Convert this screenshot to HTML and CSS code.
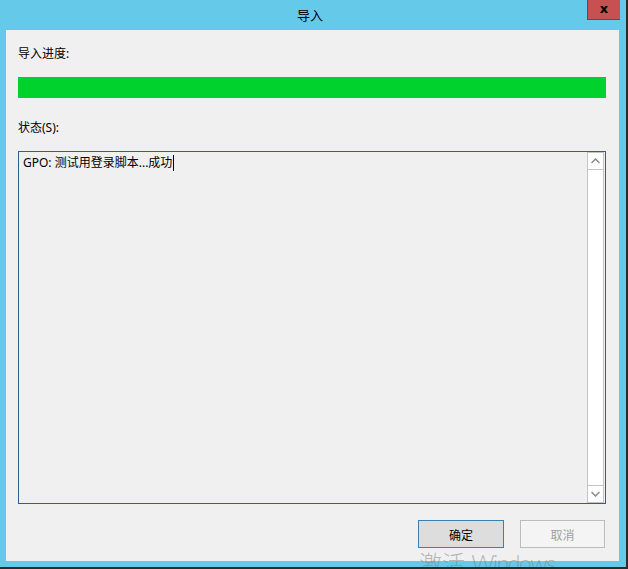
FILE: index.html
```html
<!DOCTYPE html>
<html lang="zh-CN">
<head>
<meta charset="utf-8">
<title>导入</title>
<link rel="stylesheet" href="styles.css">
</head>
<body>
<div class="window">
  <div class="titlebar">
    <span class="spacer"></span>
    <span class="title">导入</span>
    <span class="close">x</span>
  </div>
  <div class="client">
    <div class="label">导入进度:</div>
    <div class="progress"><div class="progress-fill"></div></div>
    <div class="label label-status">状态(S):</div>
    <div class="textbox">
      <div class="text-area"><span class="line">GPO: 测试用登录脚本...成功</span><span class="caret"></span></div>
      <div class="scrollbar">
        <div class="sb-btn">
          <svg width="9" height="6" viewBox="0 0 9 6"><path d="M0.5 5 L4.5 1 L8.5 5" fill="none" stroke="#8a8a8a" stroke-width="1.5"/></svg>
        </div>
        <div class="sb-track"></div>
        <div class="sb-btn">
          <svg width="9" height="6" viewBox="0 0 9 6"><path d="M0.5 1 L4.5 5 L8.5 1" fill="none" stroke="#8a8a8a" stroke-width="1.5"/></svg>
        </div>
      </div>
    </div>
    <div class="buttons">
      <div class="btn btn-default">确定</div>
      <div class="btn btn-disabled">取消</div>
    </div>
  </div>
  <div class="watermark">激活 <span class="wm-latin">Windows</span></div>
</div>
</body>
</html>
```
FILE: styles.css
```css
html, body {
  margin: 0;
  padding: 0;
  background: #65c9ea;
}
body {
  font-family: "Noto Sans", "Noto Sans CJK SC", sans-serif;
  font-size: 12px;
  color: #000;
}
.window {
  position: relative;
  width: 628px;
  height: 569px;
  box-sizing: border-box;
  background: #65c9ea;
  border-right: 2px solid #2b2b2b;
  border-bottom: 2px solid #2b2b2b;
  display: flex;
  flex-direction: column;
  overflow: hidden;
}
.titlebar {
  height: 30px;
  display: grid;
  grid-template-columns: 1fr auto 1fr;
  padding-right: 6px;
  align-items: start;
}
.title {
  font-family: "Noto Sans CJK SC", sans-serif;
  font-size: 13px;
  line-height: 30px;
  color: #000;
}
.close {
  justify-self: end;
  width: 33px;
  height: 20px;
  box-sizing: border-box;
  background: #c75050;
  border-left: 1px solid #8f3a3a;
  border-bottom: 1px solid #8f3a3a;
  font-family: "DejaVu Sans", sans-serif;
  font-weight: bold;
  font-size: 13px;
  line-height: 17px;
  text-align: center;
  color: #000;
}
.client {
  margin: 0 7px 6px 6px;
  height: 531px;
  box-sizing: border-box;
  background: #f0f0f0;
  padding: 16px 13px 0 12px;
  display: flex;
  flex-direction: column;
}
.label {
  line-height: 16px;
  height: 16px;
}
.progress {
  margin-top: 15px;
  height: 21px;
  background: #e6e6e6;
}
.progress-fill {
  height: 100%;
  width: 100%;
  background: #00d22d;
}
.label-status {
  margin-top: 22px;
}
.textbox {
  margin-top: 15px;
  height: 353px;
  box-sizing: border-box;
  border: 1px solid #2e5f8e;
  display: flex;
}
.text-area {
  flex: 1;
  padding: 3px 4px;
  line-height: 16px;
  display: flex;
  align-items: flex-start;
}
.caret {
  display: inline-block;
  width: 1px;
  height: 16px;
  margin-left: 1px;
  background: #000;
}
.scrollbar {
  width: 17px;
  margin-right: 1px;
  box-sizing: border-box;
  border: 1px solid #c4c4c4;
  background: #fff;
  display: flex;
  flex-direction: column;
}
.sb-btn {
  height: 16px;
  display: flex;
  align-items: center;
  justify-content: center;
}
.sb-btn:first-child {
  border-bottom: 1px solid #c4c4c4;
}
.sb-btn:last-child {
  border-top: 1px solid #c4c4c4;
}
.sb-track {
  flex: 1;
}
.buttons {
  margin-top: 16px;
  display: flex;
  justify-content: flex-end;
  gap: 16px;
  padding-right: 1px;
}
.btn {
  width: 86px;
  height: 28px;
  box-sizing: border-box;
  display: flex;
  align-items: center;
  justify-content: center;
  font-family: "Noto Sans CJK SC", sans-serif;
  font-size: 12px;
}
.btn-default {
  border: 1px solid #3c7fb1;
  background: #dddddd;
  color: #000;
}
.btn-disabled {
  width: 85px;
  border: 1px solid #bcbcbc;
  background: #f4f4f4;
  color: #a0a0a0;
}
.watermark {
  position: absolute;
  left: 419px;
  top: 549px;
  font-family: "Lato", "Noto Sans CJK SC", sans-serif;
  font-weight: 300;
  font-size: 23px;
  line-height: 28px;
  color: rgba(130, 130, 130, 0.55);
  white-space: nowrap;
}
.wm-latin {
  letter-spacing: -1.5px;
}
```
